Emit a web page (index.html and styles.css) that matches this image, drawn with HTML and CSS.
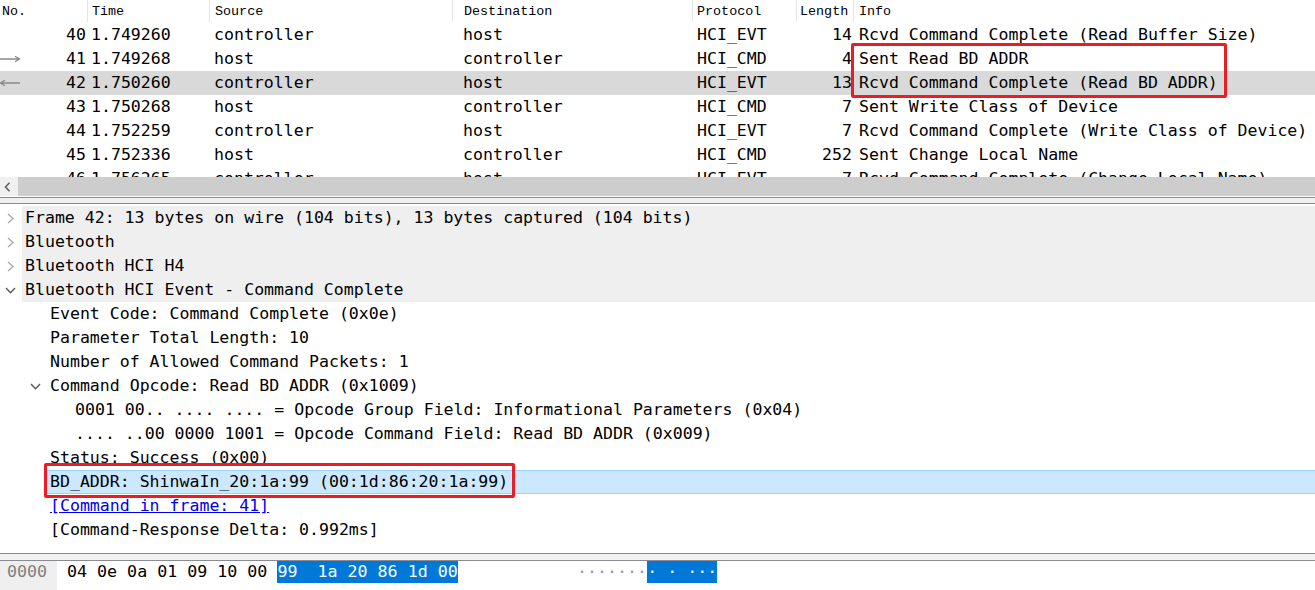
FILE: index.html
```html
<!DOCTYPE html>
<html>
<head>
<meta charset="utf-8">
<title>Wireshark</title>
<link rel="stylesheet" href="styles.css">
</head>
<body>
<div class="packet-list">
  <div class="plist-head">
    <div class="h-no">No.</div>
    <div class="h-time">Time</div>
    <div class="h-src">Source</div>
    <div class="h-dst">Destination</div>
    <div class="h-proto">Protocol</div>
    <div class="h-len">Length</div>
    <div class="h-info">Info</div>
  </div>
  <div class="plist-rows">
    <div class="prow"><div class="c-no"><span></span>40</div><div class="c-time">1.749260</div><div class="c-src">controller</div><div class="c-dst">host</div><div class="c-proto">HCI_EVT</div><div class="c-len">14</div><div class="c-info">Rcvd Command Complete (Read Buffer Size)</div></div>
    <div class="prow"><div class="c-no"><svg class="arrow" width="21" height="8" viewBox="0 0 21 8"><path d="M0 4H19M15 1.2L19.5 4L15 6.8" fill="none" stroke="#8a8a8a" stroke-width="1.3"/></svg>41</div><div class="c-time">1.749268</div><div class="c-src">host</div><div class="c-dst">controller</div><div class="c-proto">HCI_CMD</div><div class="c-len">4</div><div class="c-info">Sent Read BD ADDR</div></div>
    <div class="prow sel"><div class="c-no"><svg class="arrow" width="21" height="8" viewBox="0 0 21 8"><path d="M20 4H1M5 1.2L0.5 4L5 6.8" fill="none" stroke="#8a8a8a" stroke-width="1.3"/></svg>42</div><div class="c-time">1.750260</div><div class="c-src">controller</div><div class="c-dst">host</div><div class="c-proto">HCI_EVT</div><div class="c-len">13</div><div class="c-info">Rcvd Command Complete (Read BD ADDR)</div></div>
    <div class="prow"><div class="c-no"><span></span>43</div><div class="c-time">1.750268</div><div class="c-src">host</div><div class="c-dst">controller</div><div class="c-proto">HCI_CMD</div><div class="c-len">7</div><div class="c-info">Sent Write Class of Device</div></div>
    <div class="prow"><div class="c-no"><span></span>44</div><div class="c-time">1.752259</div><div class="c-src">controller</div><div class="c-dst">host</div><div class="c-proto">HCI_EVT</div><div class="c-len">7</div><div class="c-info">Rcvd Command Complete (Write Class of Device)</div></div>
    <div class="prow"><div class="c-no"><span></span>45</div><div class="c-time">1.752336</div><div class="c-src">host</div><div class="c-dst">controller</div><div class="c-proto">HCI_CMD</div><div class="c-len">252</div><div class="c-info">Sent Change Local Name</div></div>
    <div class="prow"><div class="c-no"><span></span>46</div><div class="c-time">1.756265</div><div class="c-src">controller</div><div class="c-dst">host</div><div class="c-proto">HCI_EVT</div><div class="c-len">7</div><div class="c-info">Rcvd Command Complete (Change Local Name)</div></div>
  </div>
  <div class="hscroll">
    <div class="hscroll-btn"><svg width="7" height="10" viewBox="0 0 7 10"><path d="M5.5 0.8L1.5 5L5.5 9.2" fill="none" stroke="#606060" stroke-width="1.6"/></svg></div>
    <div class="hscroll-thumb"></div>
  </div>
</div>

<div class="splitter"></div>

<div class="details">
  <div class="trow l0 shaded"><span class="twisty"><svg width="7" height="11" viewBox="0 0 7 11"><path d="M1 1L6 5.5L1 10" fill="none" stroke="#a8a8a8" stroke-width="1.4"/></svg></span><span class="label">Frame 42: 13 bytes on wire (104 bits), 13 bytes captured (104 bits)</span></div>
  <div class="trow l0 shaded"><span class="twisty"><svg width="7" height="11" viewBox="0 0 7 11"><path d="M1 1L6 5.5L1 10" fill="none" stroke="#a8a8a8" stroke-width="1.4"/></svg></span><span class="label">Bluetooth</span></div>
  <div class="trow l0 shaded"><span class="twisty"><svg width="7" height="11" viewBox="0 0 7 11"><path d="M1 1L6 5.5L1 10" fill="none" stroke="#a8a8a8" stroke-width="1.4"/></svg></span><span class="label">Bluetooth HCI H4</span></div>
  <div class="trow l0 shaded"><span class="twisty"><svg width="11" height="7" viewBox="0 0 11 7"><path d="M1 1L5.5 5.8L10 1" fill="none" stroke="#5a5a5a" stroke-width="1.4"/></svg></span><span class="label">Bluetooth HCI Event - Command Complete</span></div>
  <div class="trow l1"><span class="twisty"></span><span class="label">Event Code: Command Complete (0x0e)</span></div>
  <div class="trow l1"><span class="twisty"></span><span class="label">Parameter Total Length: 10</span></div>
  <div class="trow l1"><span class="twisty"></span><span class="label">Number of Allowed Command Packets: 1</span></div>
  <div class="trow l1"><span class="twisty"><svg width="11" height="7" viewBox="0 0 11 7"><path d="M1 1L5.5 5.8L10 1" fill="none" stroke="#5a5a5a" stroke-width="1.4"/></svg></span><span class="label">Command Opcode: Read BD ADDR (0x1009)</span></div>
  <div class="trow l2"><span class="twisty"></span><span class="label">0001 00.. .... .... = Opcode Group Field: Informational Parameters (0x04)</span></div>
  <div class="trow l2"><span class="twisty"></span><span class="label">.... ..00 0000 1001 = Opcode Command Field: Read BD ADDR (0x009)</span></div>
  <div class="trow l1"><span class="twisty"></span><span class="label">Status: Success (0x00)</span></div>
  <div class="trow l1 selected"><span class="twisty"></span><span class="label">BD_ADDR: ShinwaIn_20:1a:99 (00:1d:86:20:1a:99)</span></div>
  <div class="trow l1"><span class="twisty"></span><span class="label"><a class="link" href="#">[Command in frame: 41]</a></span></div>
  <div class="trow l1"><span class="twisty"></span><span class="label">[Command-Response Delta: 0.992ms]</span></div>
</div>

<div class="splitter splitter-b"></div>

<div class="bytes">
  <div class="offset">0000</div>
  <div class="hex">04 0e 0a 01 09 10 00 <span class="hl">99  1a 20 86 1d 00</span></div>
  <div class="ascii">·······<span class="hl">· · ···</span></div>
</div>

<div class="mark mark-list"></div>
<div class="mark mark-field"></div>
</body>
</html>
```

FILE: styles.css
```css
html, body {
  margin: 0;
  padding: 0;
}

body {
  width: 1315px;
  height: 590px;
  overflow: hidden;
  background: #ffffff;
  color: #000000;
  font-family: "DejaVu Sans Mono", monospace;
  font-size: 16.56px;
  position: relative;
}

/* ---------- packet list ---------- */
.plist-head {
  display: grid;
  grid-template-columns: 88px 122px 243px 240px 104px 57px 1fr;
  height: 23px;
  font-family: "Liberation Mono", monospace;
  font-size: 13.4px;
  white-space: nowrap;
}

.plist-head > div {
  border-right: 1px solid #e6e6e6;
  height: 22px;
  padding-top: 2px;
  line-height: 20px;
  box-sizing: border-box;
  overflow: hidden;
}

.plist-head > div:last-child {
  border-right: none;
}

.h-no { padding-left: 2px; }
.h-time { padding-left: 4px; }
.h-src { padding-left: 5px; }
.h-dst { padding-left: 11px; }
.h-proto { padding-left: 4px; }
.h-len { padding-left: 3px; }
.h-info { padding-left: 5px; }

.plist-rows {
  height: 154px;
  overflow: hidden;
}

.prow {
  display: grid;
  grid-template-columns: 88px 122px 243px 240px 104px 57px 1fr;
  height: 24px;
  line-height: 24px;
  white-space: nowrap;
}

.prow.sel {
  background: #d9d9d9;
}

.prow > div {
  overflow: hidden;
}

.c-no {
  display: flex;
  justify-content: space-between;
  align-items: center;
  padding-right: 2px;
}

.arrow {
  display: block;
}

.c-time { padding-left: 3px; }
.c-src { padding-left: 4px; }
.c-dst { padding-left: 10px; }
.c-proto { padding-left: 4px; }
.c-len { text-align: right; padding-right: 2px; }
.c-info { padding-left: 5px; }

.hscroll {
  display: flex;
  height: 19px;
  background: #f0f0f0;
}

.hscroll-btn {
  width: 18px;
  display: flex;
  align-items: center;
  justify-content: center;
  padding-right: 3px;
  box-sizing: border-box;
}

.hscroll-thumb {
  flex: 1;
  background: #cdcdcd;
}

/* ---------- splitters ---------- */
.splitter {
  margin-top: 1px;
  height: 5px;
  background: #f0f0f0;
  border-top: 1px solid #8a8a94;
  border-bottom: 1px solid #8a8a94;
}

.splitter-b {
  margin-top: 0;
  height: 6px;
}

/* ---------- detail tree ---------- */
.details {
  height: 349px;
  padding-top: 2px;
  box-sizing: border-box;
  overflow: hidden;
}

.trow {
  display: flex;
  height: 24px;
  line-height: 24px;
  white-space: nowrap;
}

.trow.l1 { padding-left: 25px; }
.trow.l2 { padding-left: 50px; }

.twisty {
  width: 22px;
  flex: none;
  display: flex;
  align-items: center;
  justify-content: center;
  padding-right: 2px;
  box-sizing: border-box;
}

.twisty svg {
  display: block;
}

.label {
  flex: 1;
  padding-left: 3px;
}

.trow.shaded .label {
  background: #efefef;
}

.trow.selected .label {
  background: #cce8ff;
  border-top: 1px solid #99d1ff;
  border-bottom: 1px solid #99d1ff;
  line-height: 22px;
}

.link {
  color: #0000ee;
  text-decoration: underline;
}

/* ---------- bytes pane ---------- */
.bytes {
  display: flex;
  height: 29px;
  line-height: 22px;
  white-space: pre;
  font-size: 16.65px;
}

.offset {
  width: 57px;
  padding-left: 7px;
  box-sizing: border-box;
  background: #efefef;
  color: #7f7f7f;
}

.hex {
  width: 520px;
  padding-left: 10px;
  box-sizing: border-box;
}

.ascii {
  color: #8e96a8;
}

.hl {
  display: inline-block;
  background: #0078d7;
  color: #ffffff;
}

/* ---------- annotation overlays ---------- */
.mark {
  position: absolute;
  border: 3px solid #ec1c24;
  border-radius: 2px;
  box-sizing: border-box;
}

.mark-list {
  left: 851px;
  top: 43px;
  width: 376px;
  height: 55px;
}

.mark-field {
  left: 44px;
  top: 463px;
  width: 471px;
  height: 35px;
}
```
